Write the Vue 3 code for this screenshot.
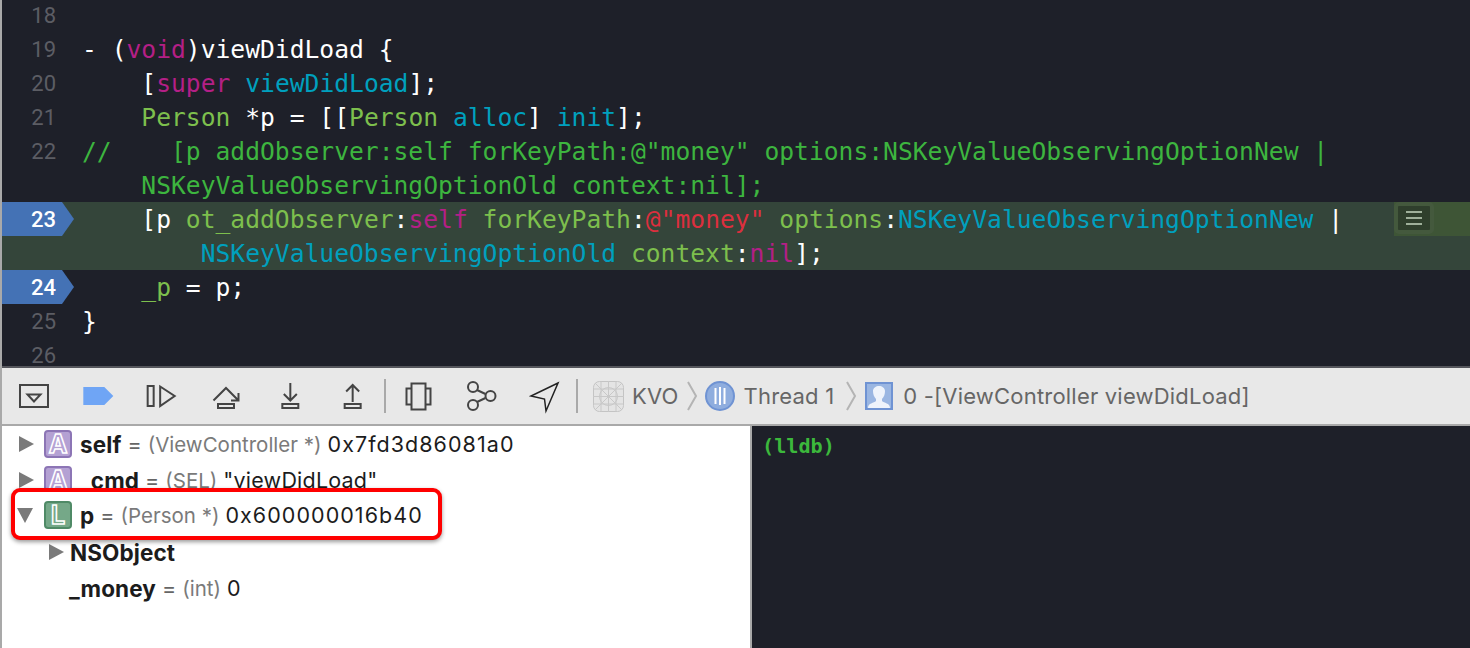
<script setup>
const W = 'w', M = 'm', C = 'c', G = 'g', K = 'k', R = 'r'
const lines = [
  { n: '18', segs: [] },
  { n: '19', segs: [[W, '- ('], [M, 'void'], [W, ')viewDidLoad {']] },
  { n: '20', segs: [[W, '    ['], [M, 'super'], [W, ' '], [C, 'viewDidLoad'], [W, '];']] },
  { n: '21', segs: [[G, '    Person'], [W, ' *p = [['], [G, 'Person'], [W, ' '], [C, 'alloc'], [W, '] '], [C, 'init'], [W, '];']] },
  { n: '22', segs: [[K, '//    [p addObserver:self forKeyPath:@"money" options:NSKeyValueObservingOptionNew |']] },
  { n: '', segs: [[K, '    NSKeyValueObservingOptionOld context:nil];']] },
  { n: '23', bp: true, hl: true, btn: true, segs: [[W, '    [p '], [G, 'ot_addObserver'], [W, ':'], [M, 'self'], [W, ' '], [G, 'forKeyPath'], [W, ':'], [R, '@"money"'], [W, ' '], [G, 'options'], [W, ':'], [C, 'NSKeyValueObservingOptionNew'], [W, ' |']] },
  { n: '', hl: true, segs: [[C, '        NSKeyValueObservingOptionOld'], [W, ' '], [G, 'context'], [W, ':'], [M, 'nil'], [W, '];']] },
  { n: '24', bp: true, segs: [[G, '    _p'], [W, ' = p;']] },
  { n: '25', segs: [[W, '}']] },
  { n: '26', segs: [] }
]
const vars = [
  { badge: 'A', kind: 'arg', name: 'self', type: '(ViewController *)', value: '0x7fd3d86081a0', cls: 'hex' },
  { badge: 'A', kind: 'arg', name: '_cmd', type: '(SEL)', value: '"viewDidLoad"', cls: 'str' }
]
</script>

<template>
  <div class="app">
    <section class="editor">
      <div v-for="(l, i) in lines" :key="i" class="row" :class="{ hl: l.hl }">
        <div class="gutter" :class="{ bp: l.bp }">{{ l.n }}</div>
        <div class="code"><span v-for="(s, j) in l.segs" :key="j" :class="s[0]">{{ s[1] }}</span></div>
        <div v-if="l.btn" class="issue"><span class="issue-btn"><i></i><i></i><i></i></span></div>
      </div>
    </section>

    <nav class="toolbar">
      <div class="tools first">
        <svg viewBox="2 368 63.67 56"><rect x="20" y="385" width="28" height="22" /><path d="M27.5 394.5h13l-6.500 7z" /></svg>
        <svg viewBox="65.67 368 63.67 56"><path class="blue" d="M83 387h21l9 9-9 9H83z" /></svg>
        <svg viewBox="129.33 368 63.67 56"><rect x="148" y="386" width="6" height="20" /><path d="M160.500 386.500 175 396l-14.500 10z" /></svg>
        <svg viewBox="193 368 63.67 56"><path d="M213.500 400.500 226 388l12 12M238.500 393v7.500H231" /><rect x="218" y="404" width="16" height="4" /></svg>
        <svg viewBox="256.67 368 63.67 56"><path d="M290 383v17M283.500 394l6.500 6.500 6.500-6.500" /><rect x="282" y="404" width="16" height="4" /></svg>
        <svg viewBox="320.33 368 63.67 56"><path d="M353 402v-17M346.500 391.500 353 385l6.500 6.500" /><rect x="345" y="404" width="16" height="4" /></svg>
      </div>
      <span class="sep"></span>
      <div class="tools second">
        <svg viewBox="386 368 63 56"><rect x="406.500" y="388.500" width="24" height="16" /><rect x="411.500" y="383.500" width="14" height="26" class="fill" /></svg>
        <svg viewBox="449 368 63 56"><path d="M477 390l8.500 4M477 402l8.500-4" /><circle cx="473" cy="387" r="5" /><circle cx="490.500" cy="396" r="5" /><circle cx="473" cy="405" r="5" /></svg>
        <svg viewBox="512 368 63 56"><path class="thin" d="M558 383 531 396l13.500 3 1.500 12z" /></svg>
      </div>
      <span class="sep two"></span>
      <div class="crumbs">
        <svg class="app-ico" viewBox="0 0 31 31"><rect x=".5" y=".5" width="30" height="30" rx="6" /><path d="M0 8h31M0 15.500h31M0 23h31M8 0v31M15.500 0v31M23 0v31M2 2l27 27M29 2 2 29" /><circle cx="15.500" cy="15.500" r="9" /></svg>
        <span class="crumb">KVO</span>
        <svg class="chev first-chev" viewBox="0 0 11 30"><path d="M1 1l8 14-8 14" /></svg>
        <svg class="thread" viewBox="0 0 30 30"><circle cx="15" cy="15" r="14" /><path d="M10.500 7v16M15 6v18M19.500 7v16" /></svg>
        <span class="crumb">Thread 1</span>
        <svg class="chev second-chev" viewBox="0 0 11 30"><path d="M1 1l8 14-8 14" /></svg>
        <svg class="user" viewBox="0 0 28 28"><rect x="1" y="1" width="26" height="26" /><path d="M3 26c0-5 6-5 8-7v-2c-2-2-3-5-3-8 0-3 3-5 6-5s6 2 6 5c0 3-1 6-3 8v2c2 2 8 2 8 7z" /></svg>
        <span class="crumb">0 -[ViewController viewDidLoad]</span>
      </div>
    </nav>

    <section class="panes">
      <div class="vars">
        <div v-for="v in vars" :key="v.name" class="var">
          <span class="tri right"></span>
          <span class="badge" :class="v.kind">{{ v.badge }}</span>
          <b>{{ v.name }}</b><span class="eq">=</span><span class="type">{{ v.type }}</span><span :class="v.cls">{{ v.value }}</span>
        </div>
        <div class="var selected">
          <span class="tri down"></span>
          <span class="badge loc">L</span>
          <b>p</b><span class="eq">=</span><span class="type">(Person *)</span><span class="hex">0x600000016b40</span>
        </div>
        <div class="var child">
          <span class="tri right small"></span>
          <b>NSObject</b>
        </div>
        <div class="var leaf">
          <b>_money</b><span class="eq">=</span><span class="type">(int)</span><span class="hex">0</span>
        </div>
      </div>
      <div class="console">(lldb)</div>
    </section>
  </div>
</template>

<style scoped>
.app { width: 1470px; height: 648px; overflow: hidden; background: #1e2029; border-left: 2px solid #a9a9a9; box-sizing: border-box; font-family: Inter, "Liberation Sans", sans-serif; }

.editor { height: 366px; overflow: hidden; background: #1e2029; }
.row { display: flex; height: 34px; position: relative; top: -2px; }
.row.hl { background: #34453a; }
.gutter { width: 80px; height: 34px; flex: none; position: relative; isolation: isolate; box-sizing: border-box; padding: 1px 26px 0 0; text-align: right; font: 22px/34px Roboto, sans-serif; color: #5c5d64; }
.gutter.bp { color: #fff; font-weight: 500; }
.gutter.bp::before { content: ""; position: absolute; z-index: -1; left: 0; top: 0; width: 72px; height: 34px; background: #4472b5; clip-path: polygon(0 0, 60px 0, 72px 17px, 60px 34px, 0 34px); }
.code { flex: 1; padding-top: 1px; white-space: pre; font: 24.65px/34px "DejaVu Sans Mono", monospace; }
.w { color: #fff; } .m { color: #b41f86; } .c { color: #00a0be; } .g { color: #7dbf4d; } .k { color: #3db53f; } .r { color: #dc2f3e; }
.issue { position: absolute; right: 0; top: 0; width: 76px; height: 34px; background: #3e5536; }
.issue-btn { position: absolute; left: 0; top: 0; width: 40px; height: 32px; box-sizing: border-box; background: #2f3f2c; border: 4px solid #44593d; border-radius: 5px; display: flex; flex-direction: column; align-items: center; justify-content: center; gap: 4px; }
.issue-btn i { display: block; width: 16px; height: 2px; background: #9fb09a; }

.toolbar { height: 60px; box-sizing: border-box; display: flex; align-items: center; background: #e8e8e8; border-top: 2px solid #55565c; border-bottom: 2px solid #a9a9a9; }
.tools { display: flex; flex: none; }
.tools svg { display: block; height: 56px; }
.first svg { width: 63.67px; }
.second svg { width: 63px; }
.tools rect, .tools circle, .tools path { fill: none; stroke: #444; stroke-width: 2; }
.tools .blue { fill: #6fa5f5; stroke: none; }
.tools rect.fill { fill: #e8e8e8; }
.tools .thin { stroke: #222; stroke-width: 1.500; }
.sep { flex: none; width: 2px; height: 34px; background: #a9a9a9; }
.sep.two { margin-left: 1px; margin-right: 15px; }
.crumbs { display: flex; align-items: center; }
.crumb { font-size: 22px; letter-spacing: .2px; color: #666; white-space: nowrap; }
.app-ico { width: 31px; height: 31px; margin-right: 8px; }
.app-ico rect { fill: #e4e4e4; stroke: #c4c4c4; }
.app-ico path, .app-ico circle { fill: none; stroke: #c8c8c8; stroke-width: 1; }
.chev { width: 11px; height: 30px; }
.first-chev { margin: 0 7px 0 8px; }
.second-chev { margin: 0 8px 0 12px; }
.chev path { fill: none; stroke: #b4b4b4; stroke-width: 2; }
.thread { width: 30px; height: 30px; margin-right: 9px; }
.thread circle { fill: #8fadde; stroke: #6f93d3; stroke-width: 2; }
.thread path { stroke: #fff; stroke-width: 2; fill: none; }
.user { width: 28px; height: 28px; margin-right: 10px; }
.user rect { fill: #9ab6e2; stroke: #6f93d3; stroke-width: 2; }
.user path { fill: #eef3fb; }

.panes { display: flex; height: 222px; }
.vars { width: 748px; flex: none; background: #fff; border-right: 2px solid #a9a9a9; position: relative; }
.var { height: 36px; display: flex; align-items: center; font-size: 21.500px; color: #1c1c1c; white-space: nowrap; position: relative; }
.var b { font-weight: 700; font-size: 22.500px; letter-spacing: .1px; }
.hex { letter-spacing: 1.050px; }
.str { letter-spacing: .2px; }
.eq { color: #666; margin: 0 6px; }
.type { color: #7a7a7a; font-size: 20.500px; margin-right: 6px; }
.tri { width: 0; height: 0; flex: none; display: block; }
.tri.right { margin: 0 10px 0 17px; border-left: 15px solid #7a7a7a; border-top: 8px solid transparent; border-bottom: 8px solid transparent; }
.tri.down { margin: 0 11px 0 2px; border-top: 15px solid #7a7a7a; border-left: 8px solid transparent; border-right: 8px solid transparent; }
.tri.small { margin: 0 6px 0 47px; }
.badge { width: 28px; height: 28px; flex: none; box-sizing: border-box; border-radius: 4px; margin-right: 8px; display: flex; align-items: center; justify-content: center; font-size: 25px; font-weight: 700; -webkit-text-stroke: 1.500px #fff; }
.badge.arg { color: #b4a1d3; background: #b4a1d3; border: 2px solid #8c75b5; }
.badge.loc { color: #75a888; background: #75a888; border: 2px solid #4f8a66; }
.selected { position: absolute; left: 9px; top: 62px; width: 431px; height: 52px; box-sizing: border-box; padding-top: 2px; background: #fff; border: 4px solid #f00; border-radius: 9px; box-shadow: 0 2px 4px rgba(0, 0, 0, .4); }
.child { margin-top: 36px; }
.leaf { padding-left: 67px; }
.console { flex: 1; background: #1e2029; padding: 8px 0 0 10px; color: #3cb83c; font: bold 20.200px/24px "DejaVu Sans Mono", monospace; }
</style>
